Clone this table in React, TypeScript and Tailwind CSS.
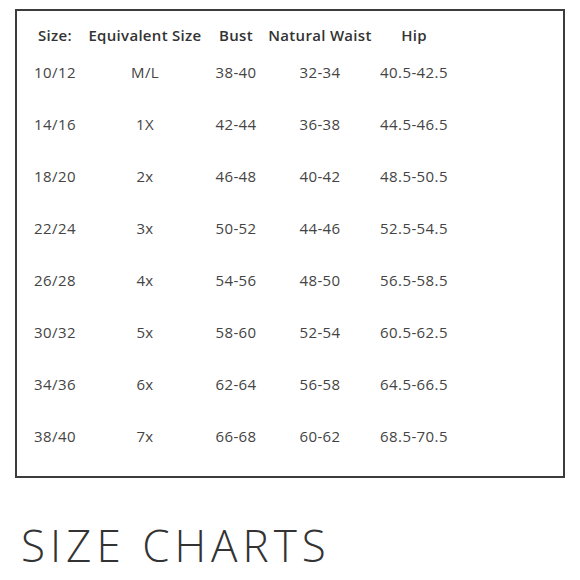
import React from "react";

const rows = [
  ["10/12", "M/L", "38-40", "32-34", "40.5-42.5"],
  ["14/16", "1X", "42-44", "36-38", "44.5-46.5"],
  ["18/20", "2x", "46-48", "40-42", "48.5-50.5"],
  ["22/24", "3x", "50-52", "44-46", "52.5-54.5"],
  ["26/28", "4x", "54-56", "48-50", "56.5-58.5"],
  ["30/32", "5x", "58-60", "52-54", "60.5-62.5"],
  ["34/36", "6x", "62-64", "56-58", "64.5-66.5"],
  ["38/40", "7x", "66-68", "60-62", "68.5-70.5"],
];

const cols = "grid grid-cols-[50px_130px_52px_116px_72px]";

export default function App() {
  return (
    <div
      className="w-[580px] h-[580px] bg-white text-[#3a3a3a] overflow-hidden"
      style={{ fontFamily: "'Open Sans', 'Liberation Sans', sans-serif" }}
    >
      <div className="pt-[9px] pl-[15px]">
        <div className="w-[550px] h-[469px] border-2 border-[#3c3c3c] pl-[13px] pt-[14px]">
          <div className={`${cols} h-[20px] items-center text-[15px] font-semibold text-[#333] leading-[20px] tracking-[0.3px]`}>
            <div className="text-center whitespace-nowrap">Size:</div>
            <div className="text-center whitespace-nowrap">Equivalent Size</div>
            <div className="text-center whitespace-nowrap">Bust</div>
            <div className="text-center whitespace-nowrap">Natural Waist</div>
            <div className="text-center whitespace-nowrap">Hip</div>
          </div>
          <div className="mt-[17px] flex flex-col gap-[32px]">
            {rows.map((r) => (
              <div key={r[0]} className={`${cols} h-[20px] items-center text-[15px] leading-[20px] text-[#444]`}>
                {r.map((c, i) => (
                  <div key={i} className="text-center whitespace-nowrap tracking-[0.4px]">
                    {c}
                  </div>
                ))}
              </div>
            ))}
          </div>
        </div>
      </div>
      <div className="pl-[21px] mt-[39px] text-[44px] font-light leading-[56px] tracking-[5px] text-[#333] whitespace-nowrap">
        SIZE CHARTS
      </div>
    </div>
  );
}
